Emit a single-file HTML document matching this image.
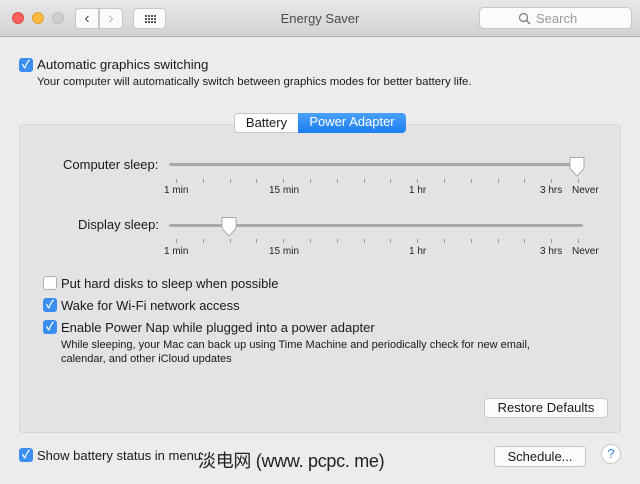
<!DOCTYPE html>
<html><head><meta charset="utf-8"><style>
*{margin:0;padding:0;box-sizing:border-box}
body{width:640px;height:484px;background:#ececec;font-family:"Liberation Sans","Noto Sans CJK SC",sans-serif;position:relative;overflow:hidden;color:#1a1a1a}
.a{position:absolute}
.tb{left:0;top:0;width:640px;height:37px;background:linear-gradient(#e8e8e8,#d2d2d2);border-bottom:1px solid #b5b5b5}
.dot{width:12px;height:12px;border-radius:50%;top:12px}
.btn{background:#fbfbfb;border:1px solid #c8c8c8;border-radius:4px}
.cb{width:14px;height:14px;border-radius:3px;background:#3b8df0;color:#fff;font-size:11px;line-height:14px;text-align:center;font-weight:bold}
.cbe{width:14px;height:14px;border-radius:3px;background:#fff;border:1px solid #b0b0b0}
.t13{font-size:13px}
.t11{font-size:11.4px}
.track{height:3px;background:#a9a9a9;border-radius:2px}
.tick{width:1px;height:4px;background:#999}
.lbl{font-size:10px;color:#222}
</style></head><body>
<div class="a tb"></div>
<div class="a dot" style="left:12px;background:#fc605c;border:1px solid #de4c46"></div>
<div class="a dot" style="left:32px;background:#fdbc40;border:1px solid #dea034"></div>
<div class="a dot" style="left:52px;background:#cfcfcf;border:1px solid #bcbcbc"></div>
<div class="a btn" style="left:75px;top:8px;width:24px;height:21px;border-radius:4px 0 0 4px;text-align:center;font-size:16px;line-height:19px;color:#555">&#8249;</div>
<div class="a btn" style="left:99px;top:8px;width:24px;height:21px;border-radius:0 4px 4px 0;text-align:center;font-size:16px;line-height:19px;color:#bbb">&#8250;</div>
<div class="a btn" style="left:133px;top:8px;width:33px;height:21px"><svg width="33" height="21"><g fill="#555"><rect x="11" y="6" width="2" height="2"/><rect x="14" y="6" width="2" height="2"/><rect x="17" y="6" width="2" height="2"/><rect x="20" y="6" width="2" height="2"/><rect x="11" y="9" width="2" height="2"/><rect x="14" y="9" width="2" height="2"/><rect x="17" y="9" width="2" height="2"/><rect x="20" y="9" width="2" height="2"/><rect x="11" y="12" width="2" height="2"/><rect x="14" y="12" width="2" height="2"/><rect x="17" y="12" width="2" height="2"/><rect x="20" y="12" width="2" height="2"/></g></svg></div>
<div class="a t13" style="left:0;width:640px;top:11px;text-align:center;color:#4a4a4a">Energy Saver</div>
<div class="a btn" style="left:479px;top:7px;width:153px;height:22px;border-radius:5px"></div>
<svg class="a" style="left:518px;top:12px" width="13" height="13"><circle cx="5.5" cy="5.5" r="4" fill="none" stroke="#777" stroke-width="1.2"/><line x1="8.5" y1="8.5" x2="12" y2="12" stroke="#777" stroke-width="1.3"/></svg>
<div class="a t13" style="left:536px;top:11px;color:#999">Search</div>

<div class="a cb" style="left:19px;top:58px">✓</div>
<div class="a t13" style="left:37px;top:57px;font-size:13.3px">Automatic graphics switching</div>
<div class="a t11" style="left:37px;top:76px">Your computer will automatically switch between graphics modes for better battery life.</div>

<div class="a" style="left:19px;top:124px;width:602px;height:309px;background:#e3e3e3;border:1px solid #d6d6d6;border-radius:4px"></div>
<div class="a t13" style="left:234px;top:113px;width:65px;height:20px;background:#fff;border:1px solid #c6c6c6;border-radius:4px 0 0 4px;text-align:center;line-height:18px">Battery</div>
<div class="a t13" style="left:298px;top:113px;width:108px;height:20px;background:linear-gradient(#4aa0fa,#1c7ef2);border-radius:0 4px 4px 0;color:#fff;text-align:center;line-height:18px">Power Adapter</div>

<div class="a t13" style="left:63px;top:157px">Computer sleep:</div>
<div class="a track" style="left:169px;top:163px;width:414px"></div>
<div class="a t13" style="left:78px;top:217px">Display sleep:</div>
<div class="a track" style="left:169px;top:224px;width:414px"></div>
<div id="ticks"></div>
<script>
var h='';for(var r=0;r<2;r++){var y=r?239:179;for(var i=0;i<16;i++){var x=176+i*26.8;h+='<div class="a tick" style="left:'+x+'px;top:'+y+'px"></div>';}
var ly=r?246:185;h+='<div class="a lbl" style="left:164px;top:'+ly+'px">1 min</div><div class="a lbl" style="left:269px;top:'+ly+'px">15 min</div><div class="a lbl" style="left:409px;top:'+ly+'px">1 hr</div><div class="a lbl" style="left:540px;top:'+ly+'px">3 hrs</div><div class="a lbl" style="left:572px;top:'+ly+'px">Never</div>';}
document.getElementById('ticks').innerHTML=h;
</script>
<svg class="a" style="left:568px;top:156px" width="18" height="22"><path d="M2 1.5h14v11l-7 7.5l-7-7.5z" fill="#fff" stroke="#aaa" stroke-width="1"/></svg>
<svg class="a" style="left:220px;top:216px" width="18" height="22"><path d="M2 1.5h14v11l-7 7.5l-7-7.5z" fill="#fff" stroke="#aaa" stroke-width="1"/></svg>

<div class="a cbe" style="left:43px;top:276px"></div>
<div class="a t13" style="left:61px;top:276px">Put hard disks to sleep when possible</div>
<div class="a cb" style="left:43px;top:298px">✓</div>
<div class="a t13" style="left:61px;top:298px">Wake for Wi-Fi network access</div>
<div class="a cb" style="left:43px;top:320px">✓</div>
<div class="a t13" style="left:61px;top:320px">Enable Power Nap while plugged into a power adapter</div>
<div class="a t11" style="left:61px;top:338px;line-height:14px;font-size:11px">While sleeping, your Mac can back up using Time Machine and periodically check for new email,<br>calendar, and other iCloud updates</div>

<div class="a btn t13" style="left:484px;top:398px;width:124px;height:20px;text-align:center;line-height:18px">Restore Defaults</div>

<div class="a cb" style="left:19px;top:448px">✓</div>
<div class="a t13" style="left:37px;top:448px">Show battery status in menu</div>
<div class="a" style="left:198px;top:447px;font-size:18px;color:#222;letter-spacing:-0.3px">淡电网 (www. pcpc. me)</div>
<div class="a btn t13" style="left:494px;top:446px;width:92px;height:21px;text-align:center;line-height:19px">Schedule...</div>
<div class="a" style="left:601px;top:444px;width:20px;height:20px;border-radius:50%;background:#fff;border:1px solid #c8c8c8;color:#3b8df0;font-size:13px;text-align:center;line-height:18px">?</div>
</body></html>
